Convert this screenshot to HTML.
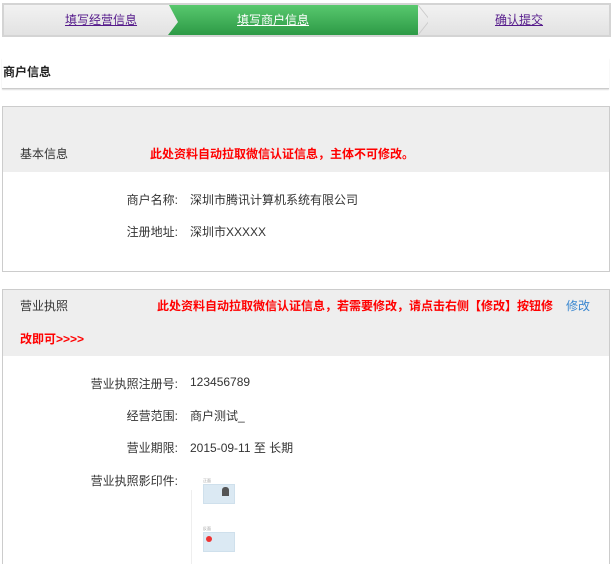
<!DOCTYPE html>
<html><head><meta charset="utf-8"><style>
*{margin:0;padding:0;box-sizing:border-box}
html,body{width:613px;height:564px;overflow:hidden}
body{background:#fff;font-family:"Liberation Sans","Noto Sans CJK SC",sans-serif;font-size:12px;color:#333;position:relative}
.a{position:absolute;white-space:nowrap}
.step{position:absolute;top:3px;height:34px;border:2px solid #d4d4d4;background:linear-gradient(#f2f2f2,#e2e2e2)}
a{color:#551a8b;text-decoration:underline}
.red{color:#f00;font-weight:bold}
.lab{text-align:right;width:100px}
</style></head><body>
<div class="step" style="left:2px;width:609px"></div>
<svg class="a" style="left:168px;top:5px" width="260" height="30">
<defs><linearGradient id="g" x1="0" y1="0" x2="0" y2="1"><stop offset="0" stop-color="#58c86e"/><stop offset="1" stop-color="#2d9a46"/></linearGradient></defs>
<polygon points="0,30 10,17 1,0 250,0 250,30" fill="url(#g)"/>
<polyline points="250,0 262,15 250,30" fill="none" stroke="#ccc"/>
</svg>
<a class="a" href="#" style="left:65px;top:11px;font-size:12px">填写经营信息</a>
<a class="a" href="#" style="left:237px;top:11px;font-size:12px;color:#fff">填写商户信息</a>
<a class="a" href="#" style="left:495px;top:11px;font-size:12px">确认提交</a>

<div class="a" style="left:2px;top:58px;width:607px;height:31px;border-bottom:1px solid #ccc;box-shadow:0 1px 1px #ddd"></div>
<div class="a" style="left:3px;top:63px;font-weight:bold;font-size:12px;color:#222">商户信息</div>

<div class="a" style="left:2px;top:106px;width:608px;height:166px;border:1px solid #ccc"></div>
<div class="a" style="left:3px;top:107px;width:606px;height:65px;background:#eee"></div>
<div class="a" style="left:20px;top:145px">基本信息</div>
<div class="a red" style="left:150px;top:145px">此处资料自动拉取微信认证信息，主体不可修改。</div>
<div class="a lab" style="left:78px;top:191px">商户名称:</div>
<div class="a" style="left:190px;top:191px">深圳市腾讯计算机系统有限公司</div>
<div class="a lab" style="left:78px;top:223px">注册地址:</div>
<div class="a" style="left:190px;top:223px">深圳市XXXXX</div>

<div class="a" style="left:2px;top:289px;width:608px;height:300px;border:1px solid #ccc"></div>
<div class="a" style="left:3px;top:290px;width:606px;height:66px;background:#eee"></div>
<div class="a" style="left:20px;top:297px">营业执照</div>
<div class="a red" style="left:157px;top:297px">此处资料自动拉取微信认证信息，若需要修改，请点击右侧【修改】按钮修</div>
<div class="a" style="left:566px;top:297px;color:#3a87d0">修改</div>
<div class="a red" style="left:20px;top:330px">改即可&gt;&gt;&gt;&gt;</div>
<div class="a lab" style="left:78px;top:375px">营业执照注册号:</div>
<div class="a" style="left:190px;top:375px">123456789</div>
<div class="a lab" style="left:78px;top:407px">经营范围:</div>
<div class="a" style="left:190px;top:407px">商户测试_</div>
<div class="a lab" style="left:78px;top:439px">营业期限:</div>
<div class="a" style="left:190px;top:439px">2015-09-11 至 长期</div>
<div class="a lab" style="left:78px;top:472px">营业执照影印件:</div>
<div class="a" style="left:191px;top:490px;width:1px;height:74px;background:#eee"></div>
<div class="a" style="left:203px;top:478px;font-size:4px;color:#999">正面</div>
<div class="a" style="left:203px;top:484px;width:32px;height:20px;background:#dbe9f3;border:1px solid #cfe0ec"></div>
<div class="a" style="left:222px;top:487px;width:7px;height:9px;background:#555;border-radius:3px 3px 0 0"></div>
<div class="a" style="left:203px;top:526px;font-size:4px;color:#999">反面</div>
<div class="a" style="left:203px;top:532px;width:32px;height:20px;background:#dbe9f3;border:1px solid #cfe0ec"></div>
<div class="a" style="left:206px;top:536px;width:6px;height:6px;background:#e33;border-radius:50%"></div>
</body></html>
